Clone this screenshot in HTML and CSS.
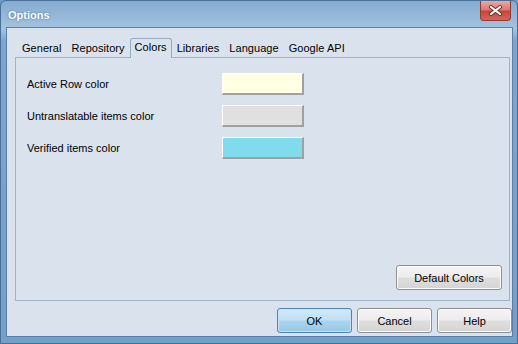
FILE: index.html
```html
<!DOCTYPE html>
<html>
<head>
<meta charset="utf-8">
<link rel="stylesheet" href="styles.css">
</head>
<body>
<div class="window">
  <div class="titlebar">
    <span class="title">Options</span>
    <div class="close">
      <svg width="15" height="11" viewBox="0 0 15 11">
        <path d="M3 2 L12 9 M12 2 L3 9" stroke="#6a2c28" stroke-width="4" stroke-linecap="round"/>
        <path d="M3 2 L12 9 M12 2 L3 9" stroke="#ffffff" stroke-width="2.2" stroke-linecap="round"/>
      </svg>
    </div>
  </div>
  <div class="client">
    <div class="tabs">
      <div class="tab">General</div>
      <div class="tab">Repository</div>
      <div class="tab selected">Colors</div>
      <div class="tab">Libraries</div>
      <div class="tab">Language</div>
      <div class="tab">Google API</div>
    </div>
    <div class="panel">
      <div class="rows">
        <div class="row"><span class="label">Active Row color</span><span class="swatch yellow"></span></div>
        <div class="row"><span class="label">Untranslatable items color</span><span class="swatch gray"></span></div>
        <div class="row"><span class="label">Verified items color</span><span class="swatch cyan"></span></div>
      </div>
      <div class="panel-foot">
        <button class="btn wide">Default Colors</button>
      </div>
    </div>
    <div class="footer">
      <button class="btn default">OK</button>
      <button class="btn">Cancel</button>
      <button class="btn">Help</button>
    </div>
  </div>
</div>
</body>
</html>
```
FILE: styles.css
```css
html, body {
  margin: 0;
  padding: 0;
  background: #6d9bc8;
}
body {
  font-family: "Liberation Sans", Arial, sans-serif;
  font-size: 11px;
  color: #000;
}
.window {
  width: 518px;
  height: 344px;
  box-sizing: border-box;
  display: flex;
  flex-direction: column;
  background: linear-gradient(to bottom, #84abd1 0px, #a4c3df 28px, #7ba6cf 40px, #72a0cb 100%);
  border: 1px solid #4b6e96;
  border-radius: 6px 6px 0 0;
}
.titlebar {
  height: 26px;
  display: flex;
  align-items: flex-start;
  justify-content: space-between;
  padding-left: 7px;
}
.title {
  margin-top: 8px;
  font-family: "Liberation Sans", Arial, sans-serif;
  font-weight: bold;
  font-size: 11px;
  color: #fff;
  text-shadow: 0 0 2px #3f6a95;
}
.close {
  width: 31px;
  height: 20px;
  margin-right: 6px;
  box-sizing: border-box;
  border: 1px solid #8f3b34;
  border-top: none;
  border-radius: 0 0 4px 4px;
  background: linear-gradient(to bottom, #e9aaa2 0%, #dc7a6f 45%, #c8463a 55%, #d4665a 100%);
  display: flex;
  align-items: center;
  justify-content: center;
}
.client {
  flex: 1;
  margin: 0 4px 6px 5px;
  border: 1px solid #5a80aa;
  background: #dae3ed;
  display: flex;
  flex-direction: column;
  padding: 10px 0 0 8px;
}
.tabs {
  display: flex;
  height: 20px;
  align-items: flex-end;
  margin-bottom: -1px;
  position: relative;
  z-index: 1;
  letter-spacing: 0.05px;
}
.tab {
  height: 18px;
  line-height: 17px;
  padding: 0 5px;
  box-sizing: border-box;
}
.tab:first-child {
  padding-left: 7px;
}
.tab.selected {
  height: 20px;
  line-height: 17px;
  padding: 0 4px;
  border: 1px solid #95abc3;
  border-bottom: none;
  border-radius: 3px 3px 0 0;
  background: #dae3ed;
}
.panel {
  height: 244px;
  box-sizing: border-box;
  margin-right: 2px;
  border: 1px solid #9fb3c7;
  display: flex;
  flex-direction: column;
  justify-content: space-between;
}
.rows {
  display: flex;
  flex-direction: column;
  gap: 10px;
  padding: 15px 0 0 11px;
}
.row {
  display: flex;
  align-items: center;
  height: 22px;
}
.label {
  width: 195px;
}
.swatch {
  width: 82px;
  height: 22px;
  box-sizing: border-box;
  border-top: 1px solid #fff;
  border-left: 1px solid #fff;
  border-right: 2px solid #a0a0a0;
  border-bottom: 2px solid #a0a0a0;
}
.yellow { background: #ffffe1; }
.gray { background: #e0e0e0; }
.cyan { background: #80dbed; }
.panel-foot {
  display: flex;
  justify-content: flex-end;
  padding: 0 7px 10px 0;
}
.btn {
  font-family: "Liberation Sans", Arial, sans-serif;
  font-size: 11px;
  color: #000;
  width: 75px;
  height: 25px;
  padding: 0;
  border: 1px solid #8e8f8f;
  border-radius: 3px;
  background: linear-gradient(to bottom, #f4f4f4 0%, #ececec 48%, #dedede 52%, #d4d4d4 100%);
  box-shadow: inset 0 0 0 1px #fcfcfc;
}
.btn.wide {
  width: 106px;
}
.btn.default {
  border-color: #4a85b4;
  background: linear-gradient(to bottom, #d2e9f8 0%, #bfe0f5 48%, #a9d4ef 52%, #98c8e8 100%);
  box-shadow: inset 0 0 0 1px #c5e4f7;
}
.footer {
  display: flex;
  justify-content: flex-end;
  gap: 5px;
  padding: 7px 0 3px 0;
}
```
